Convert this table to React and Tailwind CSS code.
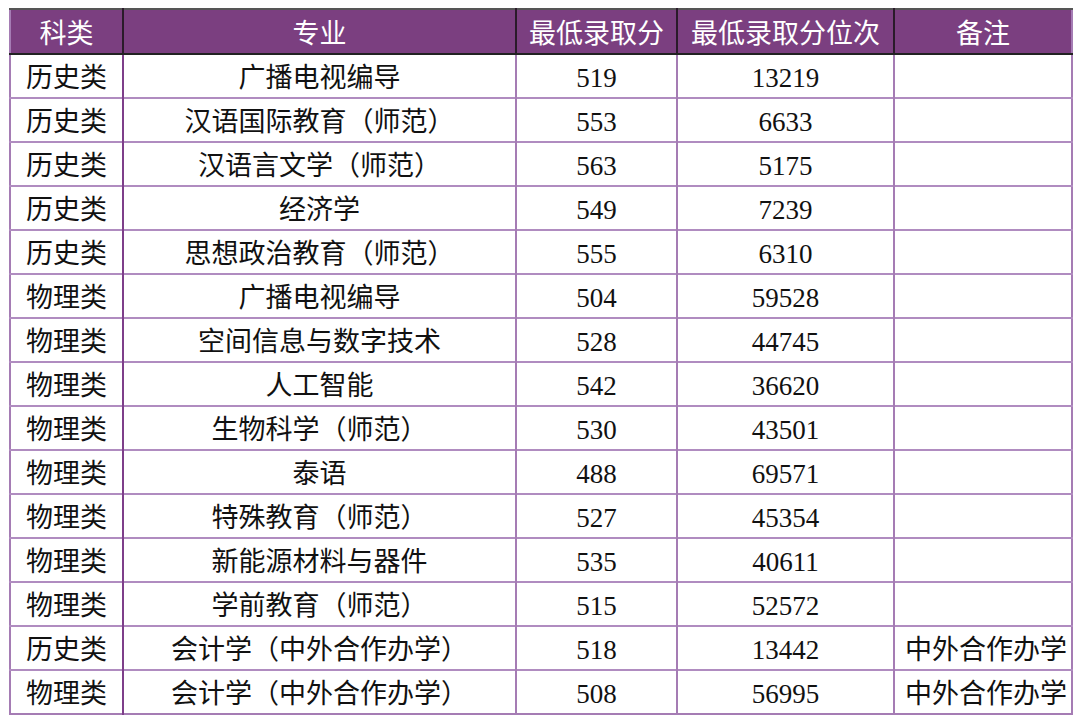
const rows = [
  ['历史类', '广播电视编导', '519', '13219', ''],
  ['历史类', '汉语国际教育（师范）', '553', '6633', ''],
  ['历史类', '汉语言文学（师范）', '563', '5175', ''],
  ['历史类', '经济学', '549', '7239', ''],
  ['历史类', '思想政治教育（师范）', '555', '6310', ''],
  ['物理类', '广播电视编导', '504', '59528', ''],
  ['物理类', '空间信息与数字技术', '528', '44745', ''],
  ['物理类', '人工智能', '542', '36620', ''],
  ['物理类', '生物科学（师范）', '530', '43501', ''],
  ['物理类', '泰语', '488', '69571', ''],
  ['物理类', '特殊教育（师范）', '527', '45354', ''],
  ['物理类', '新能源材料与器件', '535', '40611', ''],
  ['物理类', '学前教育（师范）', '515', '52572', ''],
  ['历史类', '会计学（中外合作办学）', '518', '13442', '中外合作办学'],
  ['物理类', '会计学（中外合作办学）', '508', '56995', '中外合作办学'],
]

const headers = ['科类', '专业', '最低录取分', '最低录取分位次', '备注']
const widths = ['w-[113px]', 'w-[393px]', 'w-[161px]', 'w-[217px]', 'w-[178px]']

export default function App() {
  return (
    <div
      className="w-[1080px] h-[723px] bg-white pt-[8px] pl-[9px]"
      style={{ fontFamily: '"Liberation Serif", "Noto Sans CJK SC", serif' }}
    >
      <table className="border-collapse text-[27px] text-[#111] leading-none border-2 border-[#a57cb4]">
        <thead>
          <tr className="h-[45px] bg-[#7b3f80] text-white border-t-2 border-t-[#555]">
            {headers.map((h, i) => (
              <th
                key={h}
                className={`${widths[i]} font-normal text-center pt-[5px] pb-0 border-b-2 border-b-[#222] ${
                  i < 4 ? 'border-r-2 border-r-[#2a1a2a]' : ''
                }`}
              >
                {h}
              </th>
            ))}
          </tr>
        </thead>
        <tbody>
          {rows.map((r, ri) => (
            <tr key={ri} className="h-[44px] border-t-2 border-[#b08cc0]">
              {r.map((c, ci) => (
                <td
                  key={ci}
                  className={`text-center px-0 pt-[4px] pb-0 ${
                    ci === 0 ? 'border-r-2 border-r-[#7e3f8a]' : ci < 4 ? 'border-r-2 border-r-[#a57cb4]' : ''
                  } ${ci === 4 ? 'text-left pl-[10px]' : ''}`}
                >
                  {c}
                </td>
              ))}
            </tr>
          ))}
        </tbody>
      </table>
    </div>
  )
}
